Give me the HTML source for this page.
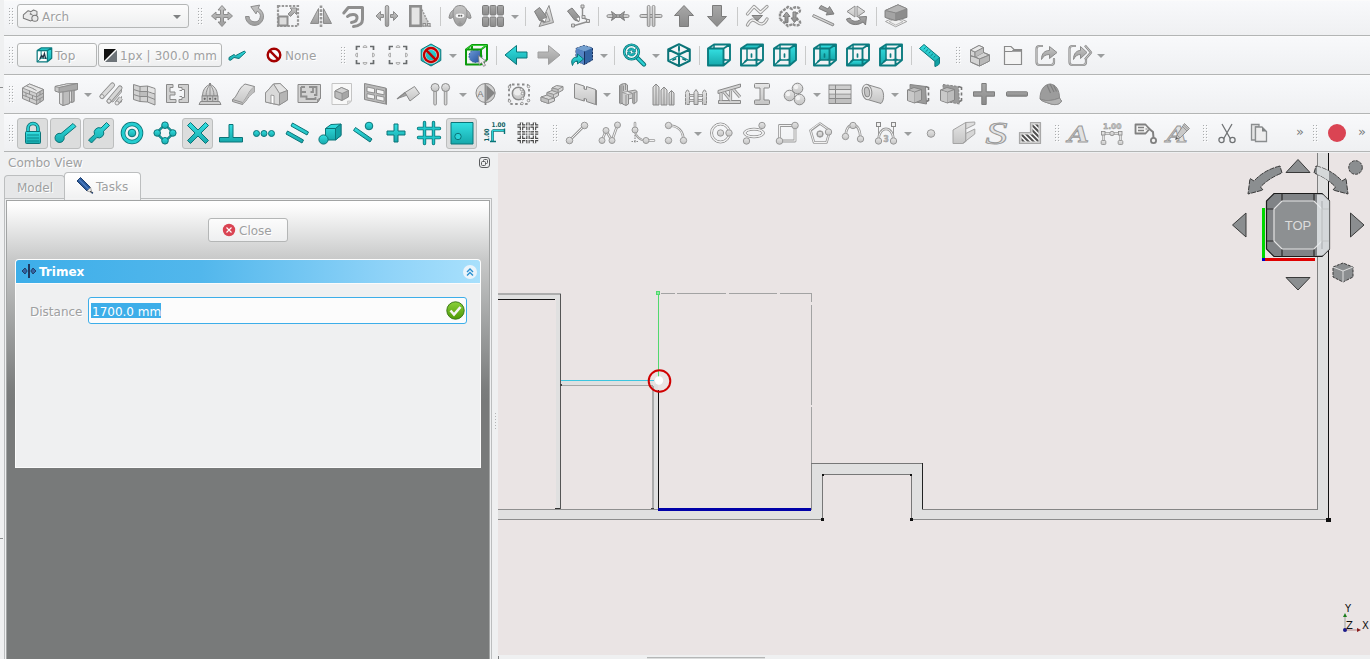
<!DOCTYPE html><html><head><meta charset="utf-8"><title>FreeCAD</title><style>
html,body{margin:0;padding:0}
body{width:1370px;height:659px;overflow:hidden;background:#eff0f1;position:relative;font-family:"DejaVu Sans","Liberation Sans",sans-serif;font-size:12px;color:#232627}
.a{position:absolute}
.tb{position:absolute;left:4px;width:1366px;background:linear-gradient(#f8f9fb,#eff0f2);border-bottom:1px solid #b3b5b5}
.tb:before{content:"";position:absolute;left:0;right:0;top:0;height:1px;background:#fbfbfb}
.grip{position:absolute;width:5px;height:17px;background-image:radial-gradient(circle at 1px 1px,#a9abac 0.8px,transparent 1.1px);background-size:3px 3px}
.sep{position:absolute;width:1px;height:19px;background:#c9caca}
.dis{color:#9ea0a1;text-shadow:1px 1px 0 #fff}
.btn{position:absolute;box-sizing:border-box;border:1px solid #b4b6b6;border-radius:3px;background:linear-gradient(#fcfcfc,#eeeff0)}
.prs{position:absolute;box-sizing:border-box;border:1px solid #bcbebe;border-radius:3px;background:#dcdddd;width:31px;height:31px}
.ic{position:absolute;width:24px;height:24px;overflow:visible}
.arr{position:absolute;width:0;height:0;border-left:4px solid transparent;border-right:4px solid transparent;border-top:4px solid #9b9d9e}
.t{position:absolute;white-space:nowrap;line-height:14px}
</style></head><body>
<svg width="0" height="0" style="position:absolute"><defs>
<symbol id="grip" viewBox="0 0 6 18"><rect x="1" y="1" width="1" height="1" fill="#fff"/><rect x="0" y="0" width="1" height="1" fill="#aaacad"/><rect x="1" y="4" width="1" height="1" fill="#fff"/><rect x="0" y="3" width="1" height="1" fill="#aaacad"/><rect x="1" y="7" width="1" height="1" fill="#fff"/><rect x="0" y="6" width="1" height="1" fill="#aaacad"/><rect x="1" y="10" width="1" height="1" fill="#fff"/><rect x="0" y="9" width="1" height="1" fill="#aaacad"/><rect x="1" y="13" width="1" height="1" fill="#fff"/><rect x="0" y="12" width="1" height="1" fill="#aaacad"/><rect x="1" y="16" width="1" height="1" fill="#fff"/><rect x="0" y="15" width="1" height="1" fill="#aaacad"/><rect x="4" y="1" width="1" height="1" fill="#fff"/><rect x="3" y="0" width="1" height="1" fill="#aaacad"/><rect x="4" y="4" width="1" height="1" fill="#fff"/><rect x="3" y="3" width="1" height="1" fill="#aaacad"/><rect x="4" y="7" width="1" height="1" fill="#fff"/><rect x="3" y="6" width="1" height="1" fill="#aaacad"/><rect x="4" y="10" width="1" height="1" fill="#fff"/><rect x="3" y="9" width="1" height="1" fill="#aaacad"/><rect x="4" y="13" width="1" height="1" fill="#fff"/><rect x="3" y="12" width="1" height="1" fill="#aaacad"/><rect x="4" y="16" width="1" height="1" fill="#fff"/><rect x="3" y="15" width="1" height="1" fill="#aaacad"/></symbol>
<linearGradient id="gg" x1="0" y1="0" x2="0" y2="1"><stop offset="0" stop-color="#c6c6c6"/><stop offset="1" stop-color="#9c9c9c"/></linearGradient>
<linearGradient id="gl" x1="0" y1="0" x2="0" y2="1"><stop offset="0" stop-color="#e6e6e6"/><stop offset="1" stop-color="#c4c4c4"/></linearGradient>
<linearGradient id="gd" x1="0" y1="0" x2="0" y2="1"><stop offset="0" stop-color="#a8a8a8"/><stop offset="1" stop-color="#8a8a8a"/></linearGradient>
<linearGradient id="tg" x1="0" y1="0" x2="0" y2="1"><stop offset="0" stop-color="#34e0e2"/><stop offset="1" stop-color="#16a8ab"/></linearGradient>
<linearGradient id="okg" x1="0" y1="0" x2="0" y2="1"><stop offset="0" stop-color="#8ad03a"/><stop offset="1" stop-color="#4e9a06"/></linearGradient>
<linearGradient id="bg" x1="0" y1="0" x2="1" y2="1"><stop offset="0" stop-color="#6f9ad6"/><stop offset="1" stop-color="#1f4f9c"/></linearGradient>
</defs></svg>
<div class="tb" style="top:0px;height:35px"></div>
<div class="tb" style="top:36px;height:38px"></div>
<div class="tb" style="top:75px;height:38px"></div>
<div class="tb" style="top:114px;height:37px"></div>
<div class="a" style="left:0;top:87px;width:3px;height:1px;background:#8d8f90"></div>
<div class="a" style="left:0;top:538px;width:3px;height:1px;background:#8d8f90"></div>
<svg class="a" style="left:9px;top:8px" width="6" height="18" shape-rendering="crispEdges"><use href="#grip"/></svg>
<div class="btn" style="left:17px;top:4px;width:172px;height:24px"></div>
<svg class="ic" style="left:18px;top:3px" viewBox="0 0 24 24"><g transform="translate(4 5) scale(.68)" fill="#e9e9e9" stroke="#777" stroke-width="1.5" stroke-linejoin="round"><path d="M2 10l7-6 6 2-3 3 6 2v5l-5 3-11-4z"/><path d="M12 6l5-3 5 2v5l-4 2"/><circle cx="19" cy="15" r="4.5"/></g></svg>
<div class="t dis" style="left:42px;top:10px">Arch</div>
<div class="arr" style="left:173px;top:15px;border-top-color:#7f8182"></div>
<svg class="a" style="left:198px;top:8px" width="6" height="18" shape-rendering="crispEdges"><use href="#grip"/></svg>
<svg class="ic" style="left:210px;top:4px" viewBox="0 0 24 24"><path fill="url(#gg)" stroke="#8c8c8c" stroke-width="1" stroke-linejoin="round" d="M12 1.5L16 6H13.500V10.500H18V8L22.500 12L18 16V13.500H13.500V18H16L12 22.500L8 18H10.500V13.500H6V16L1.500 12L6 8V10.500H10.500V6H8Z"/></svg>
<svg class="ic" style="left:243px;top:4px" viewBox="0 0 24 24"><path fill="url(#gg)" stroke="#8c8c8c" stroke-width="1" stroke-linejoin="round" d="M2.500 12.500a9 9 0 1 0 12.800-8.200l1.300-3.200-8.800 1.600 5.200 7.200 1.100-2.700a5.600 5.600 0 1 1-8 5.300z"/></svg>
<svg class="ic" style="left:276px;top:4px" viewBox="0 0 24 24"><rect x="2" y="2" width="20" height="20" fill="none" stroke="#999" stroke-width="2.200" stroke-dasharray="2.400 1.300"/><rect x="2.500" y="12.500" width="9" height="9" fill="#ddd" stroke="#8e8e8e" stroke-width="2"/><path fill="url(#gg)" stroke="#8c8c8c" stroke-width="1" stroke-linejoin="round" d="M12 10l4-4-2-2h6.500v6.500l-2-2-4 4z"/></svg>
<svg class="ic" style="left:309px;top:4px" viewBox="0 0 24 24"><path fill="url(#gg)" stroke="#8c8c8c" stroke-width="1" stroke-linejoin="round" d="M1.500 19.500H9.500V4.500Z"/><path fill="url(#gg)" stroke="#8c8c8c" stroke-width="1" stroke-linejoin="round" d="M22.500 19.500H14.500V4.500Z"/><path d="M12 1.500V23" stroke="#999" stroke-width="2.600" stroke-dasharray="2.600 1.200" fill="none"/></svg>
<svg class="ic" style="left:342px;top:4px" viewBox="0 0 24 24"><path d="M1.800 9l4.500-5.500H20.500V15.500c0 4-3.500 6.500-9 7" fill="none" stroke="#8f8f8f" stroke-width="3" stroke-linejoin="round" stroke-linecap="round"/><path d="M5.500 12.500c2.500-2.500 9-3 9.500.500c.400 3-2 5-5.500 5.500" fill="none" stroke="#8f8f8f" stroke-width="3" stroke-linecap="round"/></svg>
<svg class="ic" style="left:375px;top:4px" viewBox="0 0 24 24"><rect fill="url(#gg)" stroke="#8c8c8c" stroke-width="1" stroke-linejoin="round" x="10.300" y="1.500" width="3.400" height="21" rx="1.500"/><path fill="url(#gg)" stroke="#8c8c8c" stroke-width="1" stroke-linejoin="round" d="M1 12l4.500-4.500v3H8.500v3H5.500v3z"/><path fill="url(#gg)" stroke="#8c8c8c" stroke-width="1" stroke-linejoin="round" d="M23 12l-4.500-4.500v3H15.500v3h3v3z"/></svg>
<svg class="ic" style="left:408px;top:4px" viewBox="0 0 24 24"><path d="M12.500 3L22 22H12.500" fill="url(#gl)" stroke="#9a9a9a" stroke-width="1.600" stroke-dasharray="2 1"/><rect x="2.300" y="2.300" width="10.500" height="19.500" fill="#e4e4e4" stroke="#8e8e8e" stroke-width="2.600"/><rect x="15" y="19.500" width="2.600" height="2.600" fill="#d8d8d8" stroke="#8e8e8e"/><rect x="19.500" y="19.500" width="2.600" height="2.600" fill="#d8d8d8" stroke="#8e8e8e"/></svg>
<div class="sep" style="left:440px;top:7px"></div>
<svg class="ic" style="left:448px;top:4px" viewBox="0 0 24 24"><path fill="url(#gg)" stroke="#8c8c8c" stroke-width="1" stroke-linejoin="round" d="M6.500 6C4 6 1.500 9 1 14c1.500 1 3.500 0 4.500-1.500zM17.500 6c2.500 0 5 3 5.500 8-1.500 1-3.500 0-4.500-1.500z"/><path fill="url(#gg)" stroke="#8c8c8c" stroke-width="1" stroke-linejoin="round" d="M12 1.500c4.500 0 7 3 7 7.500 0 6-2.500 13-7 13s-7-7-7-13c0-4.500 2.500-7.500 7-7.500z"/><ellipse cx="12" cy="11.800" rx="4.400" ry="2.200" fill="#f6f6f6"/><circle cx="11" cy="11.800" r="1" fill="#666"/><circle cx="13.400" cy="11.800" r="1" fill="#666"/><path d="M10 19.500c1.200 1 2.800 1 4 0M12 17.500v2.500" fill="none" stroke="#8f8f8f" stroke-width=".8"/></svg>
<svg class="ic" style="left:481px;top:4px" viewBox="0 0 24 24"><rect fill="url(#gd)" stroke="#7c7c7c" stroke-width="1" stroke-linejoin="round" x="1.5" y="1.5" width="6" height="9.500" rx="1.200"/><rect fill="url(#gd)" stroke="#7c7c7c" stroke-width="1" stroke-linejoin="round" x="1.5" y="13" width="6" height="9.500" rx="1.200"/><rect fill="url(#gd)" stroke="#7c7c7c" stroke-width="1" stroke-linejoin="round" x="9" y="1.5" width="6" height="9.500" rx="1.200"/><rect fill="url(#gd)" stroke="#7c7c7c" stroke-width="1" stroke-linejoin="round" x="9" y="13" width="6" height="9.500" rx="1.200"/><rect fill="url(#gd)" stroke="#7c7c7c" stroke-width="1" stroke-linejoin="round" x="16.5" y="1.5" width="6" height="9.500" rx="1.200"/><rect fill="url(#gd)" stroke="#7c7c7c" stroke-width="1" stroke-linejoin="round" x="16.5" y="13" width="6" height="9.500" rx="1.200"/></svg>
<div class="arr" style="left:511px;top:15px"></div>
<div class="sep" style="left:525px;top:7px"></div>
<svg class="ic" style="left:533px;top:4px" viewBox="0 0 24 24"><path fill="url(#gl)" stroke="#8c8c8c" stroke-width="1" stroke-linejoin="round" d="M16 1.500L20.500 18.500L6 22.500Z"/><path d="M13.500 8l3.500 9-7 2z" fill="#cfcfcf" stroke="#8c8c8c" stroke-width=".8"/><path fill="url(#gd)" stroke="#7c7c7c" stroke-width="1" stroke-linejoin="round" d="M1.500 7.500l5-4 7 9-1.500 5.500-5.500-1.500z"/><path d="M9.500 15.500l2.500 2 .800-3.500z" fill="#fff"/></svg>
<svg class="ic" style="left:566px;top:4px" viewBox="0 0 24 24"><path d="M16.500 2V12M17 13.500L22 16M22 17.500L7 22" fill="none" stroke="#8f8f8f" stroke-width="1.400"/><rect fill="url(#gl)" stroke="#8c8c8c" stroke-width="1" stroke-linejoin="round" x="15" y="1" width="3" height="3"/><rect fill="url(#gl)" stroke="#8c8c8c" stroke-width="1" stroke-linejoin="round" x="16" y="11.500" width="3" height="3"/><rect fill="url(#gl)" stroke="#8c8c8c" stroke-width="1" stroke-linejoin="round" x="20.500" y="15.500" width="3" height="3"/><rect fill="url(#gl)" stroke="#8c8c8c" stroke-width="1" stroke-linejoin="round" x="5.500" y="20" width="3" height="3"/><path fill="url(#gd)" stroke="#7c7c7c" stroke-width="1" stroke-linejoin="round" d="M1.500 7l4.500-3 7.500 9-.500 4.500-4.500-1.500z"/><path d="M10.500 14.500l2.500 2.500.200-3.500z" fill="#fff"/></svg>
<div class="sep" style="left:598px;top:7px"></div>
<svg class="ic" style="left:606px;top:4px" viewBox="0 0 24 24"><rect fill="url(#gl)" stroke="#8c8c8c" stroke-width="1" stroke-linejoin="round" x="1" y="10.700" width="22" height="2.800" rx="1.200"/><path fill="url(#gd)" stroke="#7c7c7c" stroke-width="1" stroke-linejoin="round" d="M5.500 7.500L11.500 12L5.500 16.500L7 12Z"/><path fill="url(#gd)" stroke="#7c7c7c" stroke-width="1" stroke-linejoin="round" d="M18.500 7.500L12.500 12L18.500 16.500L17 12Z"/></svg>
<svg class="ic" style="left:639px;top:4px" viewBox="0 0 24 24"><rect fill="url(#gl)" stroke="#8c8c8c" stroke-width="1" stroke-linejoin="round" x="1" y="10.500" width="22" height="3" rx="1.200"/><rect fill="url(#gl)" stroke="#8c8c8c" stroke-width="1" stroke-linejoin="round" x="8.300" y="1.500" width="2.700" height="21" rx="1.200"/><rect fill="url(#gl)" stroke="#8c8c8c" stroke-width="1" stroke-linejoin="round" x="13.200" y="1.500" width="2.700" height="21" rx="1.200"/></svg>
<svg class="ic" style="left:672px;top:4px" viewBox="0 0 24 24"><path fill="url(#gd)" stroke="#7c7c7c" stroke-width="1" stroke-linejoin="round" d="M12 1.500L21.500 11.500H16.500V22.500H7.500V11.500H2.500Z"/></svg>
<svg class="ic" style="left:705px;top:4px" viewBox="0 0 24 24"><path fill="url(#gd)" stroke="#7c7c7c" stroke-width="1" stroke-linejoin="round" d="M12 22.500L21.500 12.500H16.500V1.500H7.500V12.500H2.500Z"/></svg>
<div class="sep" style="left:737px;top:7px"></div>
<svg class="ic" style="left:745px;top:4px" viewBox="0 0 24 24"><path d="M2.500 10L9 2.500L15.500 8.500L22 2.500" fill="none" stroke="#9a9a9a" stroke-width="3.200" stroke-linecap="round" stroke-linejoin="round"/><path d="M2.500 10L9 2.500L15.500 8.500L22 2.500" fill="none" stroke="#f1f1f1" stroke-width="1.400" stroke-linecap="round" stroke-linejoin="round"/><path d="M2.500 21c3-6 6-6 9.500-3s7 3 10-3" fill="none" stroke="#9a9a9a" stroke-width="3.200" stroke-linecap="round"/><path d="M2.500 21c3-6 6-6 9.500-3s7 3 10-3" fill="none" stroke="#f1f1f1" stroke-width="1.400" stroke-linecap="round"/><path fill="url(#gd)" stroke="#7c7c7c" stroke-width="1" stroke-linejoin="round" d="M7 11.500H17.500L12.300 17Z"/></svg>
<svg class="ic" style="left:778px;top:4px" viewBox="0 0 24 24"><path d="M2 9L10 3l4 2c3-3 8-2 8 1s-3 4-6 3M2 15l8 7 5-2c3 3 8 1 7-2s-4-3-6-2M2 9.500V15" fill="none" stroke="#8e8e8e" stroke-width="2.400" stroke-dasharray="3 1"/><path fill="url(#gd)" stroke="#7c7c7c" stroke-width="1" stroke-linejoin="round" d="M8.500 8L12 12.500H10v6H7v-6H5zM16.500 18.500L13 14h2V8h3v6h2z"/></svg>
<svg class="ic" style="left:811px;top:4px" viewBox="0 0 24 24"><path fill="url(#gl)" stroke="#8c8c8c" stroke-width="1" stroke-linejoin="round" d="M1.500 12.500L2.500 10.500L23 20L22 22Z"/><path fill="url(#gd)" stroke="#7c7c7c" stroke-width="1" stroke-linejoin="round" d="M8 4.500l2-3L17 5l1.500-2.500L23 10l-8 1 1.500-2.500z"/></svg>
<svg class="ic" style="left:844px;top:4px" viewBox="0 0 24 24"><path fill="url(#gl)" stroke="#8c8c8c" stroke-width="1" stroke-linejoin="round" d="M11 2v11L3 7.500z"/><path fill="url(#gl)" stroke="#8c8c8c" stroke-width="1" stroke-linejoin="round" d="M13 2v11l8-5.500z"/><path fill="url(#gd)" stroke="#7c7c7c" stroke-width="1" stroke-linejoin="round" d="M2.500 15c1 5 10 8 16.500 3l2.500 3 1-8.500-8 .500 2 2.500c-4 3-9 2-10.500-1.500z"/></svg>
<div class="sep" style="left:876px;top:7px"></div>
<svg class="ic" style="left:884px;top:4px" viewBox="0 0 24 24"><path d="M1.500 17.500L11.700 22.800L22.800 17.500L11.700 12.500Z" fill="#f0f0f0" stroke="#9c9c9c" stroke-width=".9"/><path d="M5 17.600l6.700 3.400 7.300-3.400-6.700-3z" fill="none" stroke="#a8a8a8" stroke-width=".8"/><path d="M1.200 6.500L14 .8L22.900 4.700V13.400L11.700 16.500L1.200 13.400Z" fill="#8d8d8d" stroke="#7e7e7e" stroke-linejoin="round"/><path d="M1.200 6.500L14 .8L22.900 4.700L11.700 9Z" fill="#b6b6b6" stroke="#858585" stroke-width=".8"/><path d="M11.700 9V16.500L1.200 13.400V6.500Z" fill="#a4a4a4" stroke="#858585" stroke-width=".8"/></svg>
<svg class="a" style="left:9px;top:47px" width="6" height="18" shape-rendering="crispEdges"><use href="#grip"/></svg>
<div class="btn" style="left:17px;top:43px;width:80px;height:24px"></div>
<svg class="ic" style="left:32px;top:43px" viewBox="0 0 24 24"><g transform="translate(4.500 4) scale(.66)"><path d="M2 7H16V21H2Z" fill="#fff"/><path d="M7 1.5V17H23M7 17L1 22.5" fill="none" stroke="#0b7b7f" stroke-width="1.500"/><path d="M16.5 5.5L23 1.5V17L16.5 22.5Z" fill="url(#tg)"/><path d="M1 5.5L7 1.5H23L16.5 5.5Z" fill="url(#tg)"/><path d="M1 5.5H16.5V22.5H1ZM1 5.5L7 1.5H23V17L16.5 22.5M16.5 5.5L23 1.5" fill="none" stroke="#0b7b7f" stroke-width="1.900" stroke-linejoin="round"/><path d="M5 18l3-5 2 3 2-6 2 8" fill="none" stroke="#234" stroke-width="2"/></g></svg>
<div class="t dis" style="left:55px;top:49px">Top</div>
<div class="btn" style="left:98px;top:43px;width:124px;height:24px"></div>
<svg class="a" style="left:104px;top:49px" width="13" height="13" viewBox="0 0 13 13"><path d="M0 0H13L0 13Z" fill="#111"/><path d="M13 0V13H0Z" fill="#6e7479"/><path d="M0 13L13 0" stroke="#fff" stroke-width="1.4"/></svg>
<div class="t dis" style="left:120px;top:49px;letter-spacing:0.1px">1px | 300.0 mm</div>
<svg class="ic" style="left:225px;top:43px" viewBox="0 0 24 24"><path fill="url(#tg)" stroke="#0b7478" stroke-width="1" stroke-linejoin="round" d="M4 14.500l5-3 1.500 1.200L19.500 8l1 1.500-6.500 6-5-1-3 2.500c-1.200.800-2.800-.500-2-1.500z" stroke-width=".8"/></svg>
<svg class="ic" style="left:262px;top:43px" viewBox="0 0 24 24"><g transform="translate(12 12)"><circle r="6.300" fill="#fff" fill-opacity=".6" stroke="#a40000" stroke-width="2.400"/><path d="M-4.300-4.300L4.300 4.300" stroke="#a40000" stroke-width="2.400"/></g></svg>
<div class="t dis" style="left:285px;top:49px">None</div>
<svg class="a" style="left:341px;top:47px" width="6" height="18" shape-rendering="crispEdges"><use href="#grip"/></svg>
<svg class="ic" style="left:353px;top:43px" viewBox="0 0 24 24"><path d="M3.500 7V3.500H7M17 3.500H20.500V7M20.500 17V20.500H17M7 20.500H3.500V17" fill="none" stroke="#686b6d" stroke-width="1.700"/><path d="M10 4.500a2 2 0 0 1 4 0zM10 19.500a2 2 0 0 0 4 0zM4.500 10a2 2 0 0 0 0 4zM19.500 10a2 2 0 0 1 0 4z" fill="#e8e8e8" stroke="#9a9a9a" stroke-width=".7"/></svg>
<svg class="ic" style="left:386px;top:43px" viewBox="0 0 24 24"><path d="M3.500 7V3.500H7M17 3.500H20.500V7M20.500 17V20.500H17M7 20.500H3.500V17" fill="none" stroke="#686b6d" stroke-width="1.700"/><path d="M10 4.500a2 2 0 0 1 4 0zM10 19.500a2 2 0 0 0 4 0zM4.500 10a2 2 0 0 0 0 4zM19.500 10a2 2 0 0 1 0 4z" fill="#e8e8e8" stroke="#9a9a9a" stroke-width=".7"/></svg>
<svg class="ic" style="left:419px;top:43px" viewBox="0 0 24 24"><path fill="url(#tg)" stroke="#0b7478" stroke-width="1" stroke-linejoin="round" d="M12 1L21.800 6.500V17.500L12 23L2.200 17.500V6.500Z" stroke-width="1.400"/><circle cx="12" cy="12" r="7" fill="none" stroke="#f2dede" stroke-width="3.600"/><circle cx="12" cy="12" r="7" fill="none" stroke="#c00000" stroke-width="2.400"/><path d="M7.200 7.200L16.800 16.800" stroke="#c00000" stroke-width="2.600"/></svg>
<div class="arr" style="left:449px;top:54px"></div>
<svg class="ic" style="left:464px;top:43px" viewBox="0 0 24 24"><circle cx="11.500" cy="13" r="6.500" fill="url(#bg)" stroke="#204a87" stroke-width=".8" stroke-dasharray="2 1"/><path d="M2 6.500H17V21.500H2ZM2 6.500L8 2H23V16.500L17 21.500M17 6.500L23 2M8 2V6.500" fill="none" stroke="#0c9a0c" stroke-width="2" stroke-linejoin="round"/><path d="M2.500 6L8 2.500H22.500L17 6" fill="none" stroke="#46e046" stroke-width=".8"/><path d="M14.500 12.500l8 6-3 .300 2 3.500-2 1-2-3.600-2.300 2z" fill="#eee" stroke="#777" stroke-width=".8"/></svg>
<div class="sep" style="left:496px;top:46px"></div>
<svg class="ic" style="left:504px;top:43px" viewBox="0 0 24 24"><path fill="url(#tg)" stroke="#0b7478" stroke-width="1" stroke-linejoin="round" d="M1 12L12.500 2.500V9H23V15H12.500V21.500Z"/></svg>
<svg class="ic" style="left:536.5px;top:43px" viewBox="0 0 24 24"><path d="M23 12L11.500 2.500V9H1V15H11.500V21.500Z" fill="url(#gg)" stroke="#a0a0a0" stroke-width="1"/></svg>
<svg class="ic" style="left:570px;top:43px" viewBox="0 0 24 24"><path d="M6 5.500L14 2.500L22.500 5V17L14.500 21.500L6 18Z" fill="#3465a4" stroke="#17305f" stroke-width="1" stroke-dasharray="2.500 1"/><path d="M6 5.500L14 2.500L22.500 5L14.500 8.500Z" fill="#729fcf"/><path d="M14.500 8.500V21.500L6 18V5.500Z" fill="#5584c4"/><path d="M14.500 8.500V21.500" stroke="#17305f" stroke-width="1"/><path fill="url(#tg)" stroke="#0b7478" stroke-width="1" stroke-linejoin="round" d="M2.500 22.500c-2-5 0-8.500 5-8.500v-3l6 5-6 5v-3c-2.500 0-4 1.500-5 4.500z"/></svg>
<div class="arr" style="left:600px;top:54px"></div>
<div class="sep" style="left:614px;top:46px"></div>
<svg class="ic" style="left:622px;top:43px" viewBox="0 0 24 24"><path d="M15 14.500L22 21.500" stroke="#0b7478" stroke-width="4.400" stroke-linecap="round"/><path d="M15 14.500L22 21.500" stroke="#2bd0d3" stroke-width="2.400" stroke-linecap="round"/><circle cx="9.500" cy="9" r="7.300" fill="#e6fbfb" fill-opacity=".5" stroke="#0b7478" stroke-width="2.600"/><circle cx="9.500" cy="9" r="7.300" fill="none" stroke="#2bd0d3" stroke-width="1"/><path d="M5.500 8a4 4 0 0 1 7-1.500l1-1v3.500H10l1.200-1.200a2.600 2.600 0 0 0-4 .700zM13.500 10a4 4 0 0 1-7 1.500l-1 1V9H9l-1.200 1.200a2.600 2.600 0 0 0 4-.700z" fill="#16b8bb" stroke="#0b7478" stroke-width=".6"/></svg>
<div class="arr" style="left:652px;top:54px"></div>
<svg class="ic" style="left:667px;top:43px" viewBox="0 0 24 24"><path d="M12 1.200L22.800 6.500V17.800L12 23L1.200 17.800V6.500Z M1.200 6.500L12 11.500L22.800 6.500M12 11.500V23" fill="none" stroke="#0b7478" stroke-width="2" stroke-linejoin="round"/><path d="M12 1.500V11.500M2 17.500L12 12.500L22 17.500" fill="none" stroke="#0b8a8e" stroke-width="1.200"/><path d="M12 4v3M6 17l2.500-1M16 16l2.500 1" stroke="#0b7478" stroke-width="1.800" stroke-linecap="round"/></svg>
<div class="sep" style="left:699px;top:46px"></div>
<svg class="ic" style="left:707px;top:43px" viewBox="0 0 24 24"><path d="M7 1.5V17H23M7 17L1 22.5" fill="none" stroke="#0b7b7f" stroke-width="1.500"/><path d="M5 18.500l2.500-2M11.500 11v3M15 16.500h3" fill="none" stroke="#0b7b7f" stroke-width="1.700" stroke-linecap="round"/><path d="M1 5.5H16.5V22.5H1Z" fill="url(#tg)"/><path d="M1 5.5H16.5V22.5H1ZM1 5.5L7 1.5H23V17L16.5 22.5M16.5 5.5L23 1.5" fill="none" stroke="#0b7b7f" stroke-width="1.900" stroke-linejoin="round"/></svg>
<svg class="ic" style="left:740px;top:43px" viewBox="0 0 24 24"><path d="M7 1.5V17H23M7 17L1 22.5" fill="none" stroke="#0b7b7f" stroke-width="1.500"/><path d="M5 18.500l2.500-2M11.500 11v3M15 16.500h3" fill="none" stroke="#0b7b7f" stroke-width="1.700" stroke-linecap="round"/><path d="M1 5.5L7 1.5H23L16.5 5.5Z" fill="url(#tg)"/><path d="M1 5.5H16.5V22.5H1ZM1 5.5L7 1.5H23V17L16.5 22.5M16.5 5.5L23 1.5" fill="none" stroke="#0b7b7f" stroke-width="1.900" stroke-linejoin="round"/></svg>
<svg class="ic" style="left:773px;top:43px" viewBox="0 0 24 24"><path d="M7 1.5V17H23M7 17L1 22.5" fill="none" stroke="#0b7b7f" stroke-width="1.500"/><path d="M5 18.500l2.500-2M11.500 11v3M15 16.500h3" fill="none" stroke="#0b7b7f" stroke-width="1.700" stroke-linecap="round"/><path d="M16.5 5.5L23 1.5V17L16.5 22.5Z" fill="url(#tg)"/><path d="M1 5.5H16.5V22.5H1ZM1 5.5L7 1.5H23V17L16.5 22.5M16.5 5.5L23 1.5" fill="none" stroke="#0b7b7f" stroke-width="1.900" stroke-linejoin="round"/></svg>
<div class="sep" style="left:805px;top:46px"></div>
<svg class="ic" style="left:813px;top:43px" viewBox="0 0 24 24"><path d="M7 1.5H23V17H7Z" fill="url(#tg)"/><path d="M7 1.5V17H23M7 17L1 22.5" fill="none" stroke="#0b7b7f" stroke-width="1.500"/><path d="M5 18.500l2.500-2M11.500 11v3M15 16.500h3" fill="none" stroke="#0b7b7f" stroke-width="1.700" stroke-linecap="round"/><path d="M1 5.5H16.5V22.5H1ZM1 5.5L7 1.5H23V17L16.5 22.5M16.5 5.5L23 1.5" fill="none" stroke="#0b7b7f" stroke-width="1.900" stroke-linejoin="round"/></svg>
<svg class="ic" style="left:846px;top:43px" viewBox="0 0 24 24"><path d="M1 22.5H16.5L23 17H7Z" fill="url(#tg)"/><path d="M7 1.5V17H23M7 17L1 22.5" fill="none" stroke="#0b7b7f" stroke-width="1.500"/><path d="M5 18.500l2.500-2M11.500 11v3M15 16.500h3" fill="none" stroke="#0b7b7f" stroke-width="1.700" stroke-linecap="round"/><path d="M1 5.5H16.5V22.5H1ZM1 5.5L7 1.5H23V17L16.5 22.5M16.5 5.5L23 1.5" fill="none" stroke="#0b7b7f" stroke-width="1.900" stroke-linejoin="round"/></svg>
<svg class="ic" style="left:879px;top:43px" viewBox="0 0 24 24"><path d="M1 5.5L7 1.5V17L1 22.5Z" fill="url(#tg)"/><path d="M7 1.5V17H23M7 17L1 22.5" fill="none" stroke="#0b7b7f" stroke-width="1.500"/><path d="M5 18.500l2.500-2M11.500 11v3M15 16.500h3" fill="none" stroke="#0b7b7f" stroke-width="1.700" stroke-linecap="round"/><path d="M1 5.5H16.5V22.5H1ZM1 5.5L7 1.5H23V17L16.5 22.5M16.5 5.5L23 1.5" fill="none" stroke="#0b7b7f" stroke-width="1.900" stroke-linejoin="round"/></svg>
<div class="sep" style="left:911px;top:46px"></div>
<svg class="ic" style="left:918px;top:43px" viewBox="0 0 24 24"><path fill="url(#tg)" stroke="#0b7478" stroke-width="1" stroke-linejoin="round" d="M1.500 5.500L6 1.500L21.500 14.500V20L17 23.500V18.500Z" stroke-width=".8"/><path d="M17 18.500V23.500C19.500 23 21.500 21.500 21.500 20V14.500Z" fill="#10a0a3" stroke="#0b7478" stroke-width=".6"/><path d="M7.500 4.500l-1.800 1.600M10 6.500l-2.500 2.300M12.500 8.600l-1.800 1.600M15 10.700l-2.500 2.300M17.500 12.800l-1.800 1.600" stroke="#0b7478" stroke-width=".9"/></svg>
<svg class="a" style="left:956px;top:47px" width="6" height="18" shape-rendering="crispEdges"><use href="#grip"/></svg>
<svg class="ic" style="left:968px;top:43px" viewBox="0 0 24 24"><path d="M2.500 7L11 2.500L15.500 4.500V9.500L21.500 12V18L11.500 23L2.500 19Z" fill="#d4d4d4" stroke="#8a8a8a" stroke-width="1" stroke-linejoin="round"/><path d="M2.500 7L7 9L15.500 4.500M7 9V14L2.500 12.500M7 14L11.500 16L21.500 12M11.500 16V23M7 14l8.500-4.500" fill="none" stroke="#8a8a8a" stroke-width="1"/><path d="M7 9L15.500 4.500V9.500L7 14Z" fill="#bdbdbd"/><path d="M11.500 16L21.500 12V18L11.500 23Z" fill="#b8b8b8"/><path d="M2.500 7L11 2.500L15.500 4.500L7 9Z" fill="#e9e9e9"/><path d="M2.500 7L11 2.500L15.500 4.500V9.500L21.500 12V18L11.500 23L2.500 19ZM2.500 7L7 9L15.500 4.500M7 9V14M2.500 13L7 14L11.500 16L21.500 12M11.500 16V23" fill="none" stroke="#8a8a8a" stroke-width="1" stroke-linejoin="round"/></svg>
<svg class="ic" style="left:1001px;top:43px" viewBox="0 0 24 24"><path d="M3.500 21.500V3.500H10L13 6.500H20.500V21.500Z" fill="#f4f4f4" stroke="#8a8a8a" stroke-width="1.200"/><path d="M13 6.500L11 8.500H3.500" fill="none" stroke="#8a8a8a" stroke-width="1"/><path d="M12.500 6.200H20.500V8.800H10.500Z" fill="#8a8a8a"/></svg>
<svg class="ic" style="left:1034px;top:43px" viewBox="0 0 24 24"><path d="M8 3H5.500Q2.500 3 2.500 6V19Q2.500 22 5.500 22H17Q20 22 20 19V16" fill="none" stroke="#8a8a8a" stroke-width="2.200" stroke-linecap="round"/><path d="M8 3H5.500Q2.500 3 2.500 6V19Q2.500 22 5.500 22H17Q20 22 20 19V16" fill="none" stroke="#cfcfcf" stroke-width=".7"/><path fill="url(#gg)" stroke="#8c8c8c" stroke-width="1" stroke-linejoin="round" d="M7.500 16.500c0-6 3-9 8-9V3.500L23 9.500L15.500 15.500V11.500c-4 0-6 1.500-8 5z"/></svg>
<svg class="ic" style="left:1067px;top:43px" viewBox="0 0 24 24"><path d="M8 3H5.500Q2.500 3 2.500 6V19Q2.500 22 5.500 22H16Q19 22 19 19V16" fill="none" stroke="#8a8a8a" stroke-width="2.200" stroke-linecap="round"/><path d="M8 3H5.500Q2.500 3 2.500 6V19Q2.500 22 5.500 22H16Q19 22 19 19V16" fill="none" stroke="#cfcfcf" stroke-width=".7"/><path fill="url(#gg)" stroke="#8c8c8c" stroke-width="1" stroke-linejoin="round" d="M6.500 16.500c0-6 3-9 7-9V3.500L20 9.500L13.500 15.500V11.500c-3.500 0-5 1.500-7 5z"/><path d="M18 2.500L24 9.500L18 16.500" fill="none" stroke="#8a8a8a" stroke-width="2.400" stroke-linejoin="round"/><path d="M18 2.500L24 9.500L18 16.500" fill="none" stroke="#d8d8d8" stroke-width=".8"/></svg>
<div class="arr" style="left:1097px;top:54px"></div>
<svg class="a" style="left:9px;top:86px" width="6" height="18" shape-rendering="crispEdges"><use href="#grip"/></svg>
<svg class="ic" style="left:21px;top:82px" viewBox="0 0 24 24"><path d="M1.500 6L8.500 2L22.500 7.500V18L15.500 22.500L1.500 16.500Z" fill="#cfcfcf" stroke="#8a8a8a" stroke-linejoin="round"/><path d="M1.500 6L15.500 11.500L22.500 7.500L8.500 2Z" fill="#e6e6e6" stroke="#8a8a8a" stroke-width=".8"/><path d="M15.500 11.500V22.500L22.500 18V7.500Z" fill="#bdbdbd" stroke="#8a8a8a" stroke-width=".8"/><path d="M1.500 9.500L15.500 15L22.500 11M1.500 13L15.500 18.500L22.500 14.500M8.500 8.700V12.300M5 11v3.500M11.500 13.500V17M8.500 16v3.200M5.500 4l7 2.700M12 6.700l3.500 1.800M19 9.500V13M19 16.500v3.300" fill="none" stroke="#8a8a8a" stroke-width=".9"/></svg>
<svg class="ic" style="left:54px;top:82px" viewBox="0 0 24 24"><path d="M1 4.500L12.500 2L23.500 1.500V7.500L20 8.500V19.500L17.500 20.500L15.500 19.500V21.500L9 23.500L5.500 21.500V10.500L1 9Z" fill="#c8c8c8" stroke="#8a8a8a" stroke-linejoin="round"/><path d="M1 4.500L5 5.500L23.500 1.500L12.500 2Z" fill="#ececec" stroke="#8a8a8a" stroke-width=".8"/><path d="M5 5.500V10.500L23.500 7.500V1.500Z" fill="#a9a9a9" stroke="#8a8a8a" stroke-width=".8"/><path d="M5.500 10.500V21.500L9 23.500V10Z" fill="#dcdcdc" stroke="#8a8a8a" stroke-width=".8"/><path d="M9 10V23.500L15.500 21.500V9Z" fill="#bdbdbd" stroke="#8a8a8a" stroke-width=".8"/><path d="M15.500 9.200V19.500L17.500 20.500V9Z" fill="#e2e2e2" stroke="#8a8a8a" stroke-width=".8"/><path d="M17.500 9V20.500L20 19.500V8.500Z" fill="#b4b4b4" stroke="#8a8a8a" stroke-width=".8"/></svg>
<svg class="ic" style="left:99px;top:82px" viewBox="0 0 24 24"><path d="M3 14.500L13.500 3" stroke="#8a8a8a" stroke-width="5" stroke-linecap="round"/><path d="M3 14.500L13.500 3" stroke="#dadada" stroke-width="3.400" stroke-linecap="round"/><circle cx="3" cy="14.500" r="2" fill="#e6e6e6" stroke="#8a8a8a" stroke-width=".8"/><path d="M10 19L22.500 4.500V10L14 20Z" fill="#cdcdcd" stroke="#8a8a8a" stroke-width=".8"/><path d="M10 19L21 6" stroke="#8a8a8a" stroke-width="5" stroke-linecap="round"/><path d="M10 19L21 6" stroke="#d6d6d6" stroke-width="3.400" stroke-linecap="round"/><circle cx="10" cy="19" r="2" fill="#e6e6e6" stroke="#8a8a8a" stroke-width=".8"/><path d="M18 21.500L22.500 14.500V20Z" fill="#c4c4c4" stroke="#8a8a8a" stroke-width=".8"/><path d="M18 21L22 16" stroke="#8a8a8a" stroke-width="4.600" stroke-linecap="butt"/><path d="M18 21L22 16" stroke="#d6d6d6" stroke-width="3" /><circle cx="18" cy="21" r="2" fill="#e6e6e6" stroke="#8a8a8a" stroke-width=".8"/></svg>
<svg class="ic" style="left:132px;top:82px" viewBox="0 0 24 24"><path d="M1.500 2.500L8 4.500L15.500 4L23 6.500V23L15.500 20L8 19.500L1.500 17.500Z" fill="#d2d2d2" stroke="#8a8a8a" stroke-linejoin="round"/><path d="M8 4.500V19.500M15.500 4V20M1.500 7.500L8 9.500L15.500 9.500L23 12M1.500 12.500L8 14.500L15.500 14.500L23 17.500" fill="none" stroke="#8a8a8a" stroke-width="1"/><path d="M8.500 10L15 10V14L8.500 14Z" fill="#bcbcbc"/><path d="M16 5L22.500 7V11.300L16 9Z" fill="#e4e4e4"/></svg>
<svg class="ic" style="left:165px;top:82px" viewBox="0 0 24 24"><path d="M1.500 2.500H8V5.500H5V10H10V13H5V17.500H11V20.500H1.500ZM13.500 2.500H23.500V20.500H14V17.500H17V15.500H19.500V7.500H17V5.500H13.500Z" fill="#d0d0d0" stroke="#8a8a8a" stroke-width="1"/><path d="M17 8.500h-2.500M17 14.500h-2.500" stroke="#8a8a8a"/></svg>
<svg class="ic" style="left:198px;top:82px" viewBox="0 0 24 24"><path d="M4.500 14C4.500 8 8 3.500 12 2.500C16 3.500 19.500 8 19.500 14Z" fill="url(#gl)" stroke="#8a8a8a"/><path d="M12 2.500V14M8 14C8 9 10 4.500 12 2.500C14 4.500 16 9 16 14" fill="none" stroke="#8a8a8a" stroke-width=".9"/><rect x="11" y="1" width="2" height="2.500" fill="#8a8a8a"/><rect x="4" y="14" width="16" height="5.500" fill="#c6c6c6" stroke="#8a8a8a"/><path d="M9.300 14v5.500M14.700 14v5.500" stroke="#8a8a8a" stroke-width=".9"/><circle cx="6.700" cy="16.800" r="1.100" fill="#666"/><circle cx="12" cy="16.800" r="1.100" fill="#666"/><circle cx="17.300" cy="16.800" r="1.100" fill="#666"/><path d="M2.500 19.500H21.500L23 22.500H1Z" fill="#cfcfcf" stroke="#8a8a8a"/></svg>
<svg class="ic" style="left:231px;top:82px" viewBox="0 0 24 24"><path d="M1.500 17.500C6 15.500 7 6.500 14 2L23.500 4.500V10C17.500 13 16 19 11.500 22.500L1.500 19.500Z" fill="url(#gl)" stroke="#8a8a8a" stroke-linejoin="round"/><path d="M1.500 17.500L11.500 20.500C16 16.500 17.500 8.500 23.500 4.500M11.500 20.500V22.500" fill="none" stroke="#8a8a8a" stroke-width=".9"/><path d="M11.500 20.500C16 16.500 17.500 8.500 23.500 4.500V10C17.500 13 16 19 11.500 22.500Z" fill="#bdbdbd"/></svg>
<svg class="ic" style="left:264px;top:82px" viewBox="0 0 24 24"><path d="M1.500 11L9.500 2L16 1.500L23.500 8.500V18L15 23L1.500 20Z" fill="#cdcdcd" stroke="#8a8a8a" stroke-linejoin="round"/><path d="M9.500 2L16 1.500L23.500 8.500L15.500 11.500Z" fill="#e3e3e3" stroke="#8a8a8a" stroke-width=".8"/><path d="M15.500 11.500V23L23.500 18V8.500Z" fill="#b5b5b5" stroke="#8a8a8a" stroke-width=".8"/><path d="M1.500 11L9.500 2L15.500 11.500V23L1.500 20Z" fill="#d9d9d9" stroke="#8a8a8a" stroke-width=".8"/><path d="M7 21.200V13l3 .600V21.900Z" fill="#fff" stroke="#8a8a8a" stroke-width=".8"/></svg>
<svg class="ic" style="left:297px;top:82px" viewBox="0 0 24 24"><path d="M1 2.500H23.500V16L20.500 20.500H1Z" fill="#d4d4d4" stroke="#8a8a8a"/><path d="M20.500 20.500V17.500L23.500 16Z" fill="#a8a8a8" stroke="#8a8a8a" stroke-width=".8"/><path d="M4 5h4M4 5v9.500h5.500v2.500h9V15M4 10h5M12 5h7.500v8H17M16 5v5h-2.500" fill="none" stroke="#8f8f8f" stroke-width="1.800"/></svg>
<svg class="ic" style="left:330px;top:82px" viewBox="0 0 24 24"><path d="M2 1.500H21.500V19L17.500 22.500H2Z" fill="#f8f8f8" stroke="#c4c4c4"/><path d="M17.500 22.500V19H21.500Z" fill="#dedede" stroke="#c4c4c4" stroke-width=".8"/><path d="M5 9L11.500 5.500L18.500 8.500V15L12 18.500L5 15.500Z" fill="#a6a6a6" stroke="#8a8a8a" stroke-width=".9"/><path d="M5 9L11.500 5.500L18.500 8.500L12 11.500Z" fill="#d2d2d2" stroke="#8a8a8a" stroke-width=".8"/><path d="M12 11.500V18.500L5 15.500V9Z" fill="#bcbcbc" stroke="#8a8a8a" stroke-width=".8"/></svg>
<svg class="ic" style="left:363px;top:82px" viewBox="0 0 24 24"><path d="M1.500 1.500L22.500 6L23.500 6.500V22.500L22.500 22L1.500 17.500Z" fill="#b9b9b9" stroke="#8a8a8a" stroke-linejoin="round"/><path d="M4 5L11.500 6.600V11L4 9.600ZM13.500 7L21 8.700V12.800L13.500 11.300ZM4 11.700L11.500 13.200V17.200L4 15.800ZM13.500 13.600L21 15V19.300L13.500 17.700Z" fill="#f3f3f3" stroke="#8a8a8a" stroke-width=".9"/><path d="M22.500 6V22" stroke="#8a8a8a" stroke-width=".8"/></svg>
<svg class="ic" style="left:396px;top:82px" viewBox="0 0 24 24"><path d="M1.500 16.500L9 10.500L11.500 13Z" fill="#a4a4a4" stroke="#8a8a8a" stroke-width=".9"/><path d="M9 10.500L18.500 4.500L23.500 11.500L14 19Z" fill="url(#gl)" stroke="#8a8a8a" stroke-linejoin="round"/><path d="M1 17L9 10.500" stroke="#8a8a8a" stroke-width="1.200"/></svg>
<svg class="ic" style="left:429px;top:82px" viewBox="0 0 24 24"><rect x="4.800" y="8" width="2.600" height="15" rx="1" fill="#d6d6d6" stroke="#8a8a8a" stroke-width=".9"/><rect x="15.300" y="8" width="2.600" height="15" rx="1" fill="#d6d6d6" stroke="#8a8a8a" stroke-width=".9"/><circle cx="6.100" cy="5.500" r="4" fill="url(#gl)" stroke="#8a8a8a"/><circle cx="16.600" cy="5.500" r="4" fill="url(#gl)" stroke="#8a8a8a"/></svg>
<svg class="ic" style="left:474px;top:82px" viewBox="0 0 24 24"><circle cx="11.500" cy="11" r="9.500" fill="#dedede" stroke="#8a8a8a"/><path d="M11.500 1.500V23" stroke="#808080" stroke-width="1.800"/><path d="M11.500 1.500A9.500 9.500 0 0 1 11.500 20.500Z" fill="#d0d0d0" stroke="#8a8a8a" stroke-width=".8"/><path d="M12.300 3L21 11L12.300 19.500Z" fill="#858585"/><text x="3.300" y="14.500" font-family="Liberation Sans,sans-serif" font-size="9.500" fill="#777">A</text></svg>
<svg class="ic" style="left:507px;top:82px" viewBox="0 0 24 24"><rect x="2" y="2.500" width="20" height="19.500" rx="3" fill="none" stroke="#8a8a8a" stroke-width="1.800" stroke-dasharray="2.500 2.500"/><circle cx="11.500" cy="11.500" r="6.200" fill="url(#gl)" stroke="#8a8a8a" stroke-width="1.400"/><circle cx="10.500" cy="10" r="3.500" fill="#ececec"/><circle cx="14.500" cy="7.500" r="1.300" fill="#eee" stroke="#8a8a8a" stroke-width=".8"/><circle cx="15.500" cy="11.500" r="1.300" fill="#eee" stroke="#8a8a8a" stroke-width=".8"/><circle cx="15.500" cy="16.500" r="1.300" fill="#eee" stroke="#8a8a8a" stroke-width=".8"/><circle cx="15" cy="21.500" r="1.300" fill="#eee" stroke="#8a8a8a" stroke-width=".8"/><circle cx="2.500" cy="5" r="1.300" fill="#eee" stroke="#8a8a8a" stroke-width=".8"/><circle cx="2.500" cy="19" r="1.300" fill="#eee" stroke="#8a8a8a" stroke-width=".8"/><circle cx="21.500" cy="4.500" r="1.300" fill="#eee" stroke="#8a8a8a" stroke-width=".8"/><circle cx="21.500" cy="18.500" r="1.300" fill="#eee" stroke="#8a8a8a" stroke-width=".8"/></svg>
<svg class="ic" style="left:540px;top:82px" viewBox="0 0 24 24"><path d="M1 15L7 13V10.500L12 8.500V6L16.500 3.500L23 4.500V8L18.500 10.500V13.500L14.500 16V19L8.500 21.500L1 19Z" fill="#d6d6d6" stroke="#8a8a8a" stroke-linejoin="round"/><path d="M1 15L8.500 17.500L14.500 16L7 13M8.500 17.500V21.500M7 10.500L13.500 12.500L18.500 10.500L12 8.500M13.500 12.500V16M12 6L18 7.500L23 4.500M18 7.500V10.500" fill="none" stroke="#8a8a8a" stroke-width=".9"/><path d="M1 15L8.500 17.500V21.500L1 19ZM7 10.500L13.500 12.500V16L7 13ZM12 6L18 7.500V10.500L12 8.500Z" fill="#c0c0c0" stroke="#8a8a8a" stroke-width=".7"/></svg>
<svg class="ic" style="left:573px;top:82px" viewBox="0 0 24 24"><path d="M1.500 2L3 1.500L11 4V7L13.500 7.500V4.500L22.500 7.500L23.500 8.500V23L22.500 22.500L13.500 19.500V17L11 16.500V19L1.500 16Z" fill="url(#gl)" stroke="#8a8a8a" stroke-linejoin="round"/><path d="M22.500 7.500V22.500" stroke="#8a8a8a" stroke-width=".9"/><path d="M22.500 7.500L23.500 8.500V23L22.500 22.500Z" fill="#8f8f8f"/><path d="M11 4l1 .500v3l-1-.500zM11 16.500l1 .400v2.600l-1-.500z" fill="#8f8f8f"/></svg>
<svg class="ic" style="left:618px;top:82px" viewBox="0 0 24 24"><path d="M1.500 3.500L4 2L7.500 1.500L9.500 3V9.500L17.500 8L19 9.500V19.500L16 22L14.500 21V16L10.500 17V22L8 23.500L4.500 22V21L2.500 22L1.500 21Z" fill="#cfcfcf" stroke="#8a8a8a" stroke-linejoin="round"/><path d="M4 2V21.500M7.500 1.500V8M5.500 3.500V9M9.500 9.500L14.500 11.500L19 9.500M14.500 11.500V21M10.500 11V17M16.500 11V21.500M8 13v10M2.800 3.500V21" fill="none" stroke="#8a8a8a" stroke-width=".9"/><path d="M4.500 10.500L9.500 9.500L14.500 11.500L10 12.500Z" fill="#e9e9e9" stroke="#8a8a8a" stroke-width=".7"/><path d="M14.500 11.500V21L16.500 21.500V11Z" fill="#a9a9a9"/></svg>
<svg class="ic" style="left:651px;top:82px" viewBox="0 0 24 24"><path d="M2 5L5 2L8 5V23H2Z" fill="url(#gl)" stroke="#8a8a8a" stroke-linejoin="round"/><path d="M10 8L13 5L16 8V23H10Z" fill="url(#gl)" stroke="#8a8a8a" stroke-linejoin="round"/><path d="M18 11L20.500 8.500L23 11V23H18Z" fill="url(#gl)" stroke="#8a8a8a" stroke-linejoin="round"/><path d="M5 2V23M13 5V23M20.500 8.500V23" stroke="#8a8a8a" stroke-width=".9"/></svg>
<svg class="ic" style="left:684px;top:82px" viewBox="0 0 24 24"><path d="M1 13.500H23M1 18.500H23" stroke="#8a8a8a" stroke-width="3"/><path d="M1 13.500H23M1 18.500H23" stroke="#dcdcdc" stroke-width="1.400"/><path d="M1.500 10.500L3.500 7.500L5.500 10.500V22.500H1.500Z" fill="url(#gl)" stroke="#8a8a8a" stroke-dasharray="3 .8"/><path d="M10 10.500L12 7.500L14 10.500V22.500H10Z" fill="url(#gl)" stroke="#8a8a8a"/><path d="M18.500 10.500L20.500 7.500L22.500 10.500V22.500H18.500Z" fill="url(#gl)" stroke="#8a8a8a" stroke-dasharray="3 .8"/></svg>
<svg class="ic" style="left:717px;top:82px" viewBox="0 0 24 24"><path d="M1 8.500L23.500 2V5L1 11.500Z" fill="#d3d3d3" stroke="#8a8a8a" stroke-linejoin="round"/><path d="M1.500 18.500H23.500V21.500H1.500Z" fill="#d3d3d3" stroke="#8a8a8a"/><path d="M4 11V18.500M7 10L14 18.500M13.500 8.500V18.500M16.500 7.500L23 15" stroke="#8a8a8a" stroke-width="3.200"/><path d="M4 11V18.500M7 10L14 18.500M13.500 8.500V18.500M16.500 7.500L23 15" stroke="#d8d8d8" stroke-width="1.600"/></svg>
<svg class="ic" style="left:750px;top:82px" viewBox="0 0 24 24"><path d="M4.500 2.500Q4.500 1.500 5.500 1.500H18.500Q19.500 1.500 19.500 2.500V5Q19.500 6 18.500 6H14V18H18.500Q19.500 18 19.500 19V21.500Q19.500 22.500 18.500 22.500H5.500Q4.500 22.500 4.500 21.500V19Q4.500 18 5.500 18H10V6H5.500Q4.500 6 4.500 5Z" fill="url(#gl)" stroke="#8a8a8a"/></svg>
<svg class="ic" style="left:783px;top:82px" viewBox="0 0 24 24"><circle cx="14.500" cy="6.500" r="5.300" fill="url(#gl)" stroke="#8a8a8a"/><circle cx="6.500" cy="13.500" r="5.300" fill="url(#gl)" stroke="#8a8a8a"/><circle cx="16.500" cy="17.500" r="5.300" fill="url(#gl)" stroke="#8a8a8a"/><circle cx="13" cy="5" r="2.200" fill="#f2f2f2"/><circle cx="5" cy="12" r="2.200" fill="#f2f2f2"/><circle cx="15" cy="16" r="2.200" fill="#f2f2f2"/></svg>
<svg class="ic" style="left:828px;top:82px" viewBox="0 0 24 24"><rect x="1" y="3" width="22" height="18.500" fill="#cdcdcd" stroke="#8a8a8a"/><path d="M1 7.500H23M1 12H23M1 16.500H23M7.500 3V21.500" stroke="#8a8a8a" stroke-width="1"/><rect x="1.500" y="8" width="21" height="3.500" fill="#e4e4e4"/><rect x="1.500" y="17" width="21" height="4" fill="#c0c0c0"/><path d="M7.500 3V21.500" stroke="#8a8a8a" stroke-width="1"/></svg>
<svg class="ic" style="left:861px;top:82px" viewBox="0 0 24 24"><path d="M6 2.500L19.500 6.500C23 8 24 18 20 21.500L6.500 17.500Z" fill="url(#gl)" stroke="#8a8a8a"/><ellipse cx="6" cy="10" rx="4.800" ry="7.700" fill="#e9e9e9" stroke="#8a8a8a" transform="rotate(-8 6 10)"/><ellipse cx="6" cy="10" rx="2.600" ry="4.800" fill="#c4c4c4" stroke="#8a8a8a" transform="rotate(-8 6 10)"/></svg>
<svg class="ic" style="left:906px;top:82px" viewBox="0 0 24 24"><path d="M4 2.500L19.500 4.500L20.500 22L4.500 19Z" fill="#9b9b9b" stroke="#858585" /><path d="M1.500 8L8 5.500L15.500 7.500V18L8.500 21L1.500 18.500Z" fill="#bdbdbd" stroke="#858585"/><path d="M1.500 8L8.500 10L15.500 7.500M8.500 10V21" fill="none" stroke="#858585" stroke-width=".9"/><path d="M2 8.600L8.500 10.500V20.500L2 18.200Z" fill="#c9c9c9"/><path d="M19.500 4.500L22.500 5.500V8M22.500 10.500V13.500M22.500 16V18.500L20.500 19.500" fill="none" stroke="#777" stroke-width="1.600"/></svg>
<svg class="ic" style="left:939px;top:82px" viewBox="0 0 24 24"><path d="M4 2.500L19.500 4.500L20.500 22L4.500 19Z" fill="#9b9b9b" stroke="#858585" stroke-dasharray="2.500 1.200"/><path d="M1.500 8L8 5.500L15.500 7.500V18L8.500 21L1.500 18.500Z" fill="#bdbdbd" stroke="#858585"/><path d="M1.500 8L8.500 10L15.500 7.500M8.500 10V21" fill="none" stroke="#858585" stroke-width=".9"/><path d="M2 8.600L8.500 10.500V20.500L2 18.200Z" fill="#c9c9c9"/><path d="M19.500 4.500L22.500 5.500V8M22.500 10.500V13.500M22.500 16V18.500L20.500 19.500" fill="none" stroke="#777" stroke-width="1.600"/></svg>
<svg class="ic" style="left:972px;top:82px" viewBox="0 0 24 24"><path fill="url(#gd)" stroke="#7c7c7c" stroke-width="1" stroke-linejoin="round" d="M9.800 1.500H14.200V9.800H22.500V14.200H14.200V22.500H9.800V14.200H1.500V9.800H9.800Z"/></svg>
<svg class="ic" style="left:1005px;top:82px" viewBox="0 0 24 24"><rect fill="url(#gd)" stroke="#7c7c7c" stroke-width="1" stroke-linejoin="round" x="1.500" y="9.800" width="21" height="4.400" rx=".8"/></svg>
<svg class="ic" style="left:1038px;top:82px" viewBox="0 0 24 24"><path d="M2 17C2 8 6 2.500 12 2C18 2.500 21.500 8 21.500 16L23.500 19C22.500 22 18 23.500 13 22C9 20.500 4 19.500 2 17Z" fill="#9c9c9c" stroke="#8a8a8a"/><path d="M2 17C6 19 13 19.500 21.500 16" fill="none" stroke="#7c7c7c" stroke-width="1"/><path d="M9 3L12.500 11M12 2L16 10M15.500 3L18.500 9.500" fill="none" stroke="#808080" stroke-width="1.200"/><path d="M2 17C4 19.500 9 20.500 13 22C18 23.500 22.500 22 23.500 19L21.500 16C13 19.500 6 19 2 17Z" fill="#b2b2b2" stroke="#8a8a8a" stroke-width=".8"/></svg>
<div class="arr" style="left:84px;top:93px"></div>
<div class="arr" style="left:459px;top:93px"></div>
<div class="arr" style="left:603px;top:93px"></div>
<div class="arr" style="left:813px;top:93px"></div>
<div class="arr" style="left:891px;top:93px"></div>
<svg class="a" style="left:9px;top:125px" width="6" height="18" shape-rendering="crispEdges"><use href="#grip"/></svg>
<div class="prs" style="left:17px;top:118px"></div>
<div class="prs" style="left:50px;top:118px"></div>
<div class="prs" style="left:83px;top:118px"></div>
<div class="prs" style="left:182px;top:118px"></div>
<div class="prs" style="left:446px;top:118px"></div>
<svg class="ic" style="left:21px;top:121px" viewBox="0 0 24 24"><path d="M7 11V7.500a5 5 0 0 1 10 0V11" fill="none" stroke="#0b7478" stroke-width="3.600"/><path d="M7 11V7.500a5 5 0 0 1 10 0V11" fill="none" stroke="#2ed3d6" stroke-width="1.800"/><rect fill="url(#tg)" stroke="#0b7478" stroke-width="1" stroke-linejoin="round" x="4.500" y="10.500" width="15" height="12" rx="1"/><path d="M6 14h12M6 17h12M6 20h12" stroke="#0b8a8e" stroke-width="1"/></svg>
<svg class="ic" style="left:54px;top:121px" viewBox="0 0 24 24"><path fill="url(#tg)" stroke="#0b7478" stroke-width="1" stroke-linejoin="round" d="M19 2.500L22 5.500L10 15.500A4.600 4.600 0 1 1 7 12.500Z"/></svg>
<svg class="ic" style="left:87px;top:121px" viewBox="0 0 24 24"><path fill="url(#tg)" stroke="#0b7478" stroke-width="1" stroke-linejoin="round" d="M19.500 1.500L22.500 4.500L16.500 10.200A5 5 0 0 1 9.800 16.500L4.500 22L1.500 19L7.500 13.500A5 5 0 0 1 14 7Z"/></svg>
<svg class="ic" style="left:120px;top:121px" viewBox="0 0 24 24"><circle cx="12" cy="12" r="9" fill="none" stroke="#0b7478" stroke-width="4.600"/><circle cx="12" cy="12" r="9" fill="none" stroke="#25cdd0" stroke-width="3"/><circle fill="url(#tg)" stroke="#0b7478" stroke-width="1" stroke-linejoin="round" cx="12" cy="12" r="3.800"/></svg>
<svg class="ic" style="left:153px;top:121px" viewBox="0 0 24 24"><path d="M12 3.500L20.500 12L12 20.500L3.500 12Z" fill="none" stroke="#0b7478" stroke-width="2.400"/><path d="M12 3.500L20.500 12L12 20.500L3.500 12Z" fill="none" stroke="#25cdd0" stroke-width=".8"/><circle fill="url(#tg)" stroke="#0b7478" stroke-width="1" stroke-linejoin="round" cx="12" cy="4.200" r="3.300"/><circle fill="url(#tg)" stroke="#0b7478" stroke-width="1" stroke-linejoin="round" cx="19.800" cy="12" r="3.300"/><circle fill="url(#tg)" stroke="#0b7478" stroke-width="1" stroke-linejoin="round" cx="12" cy="19.800" r="3.300"/><circle fill="url(#tg)" stroke="#0b7478" stroke-width="1" stroke-linejoin="round" cx="4.200" cy="12" r="3.300"/></svg>
<svg class="ic" style="left:186px;top:121px" viewBox="0 0 24 24"><path fill="url(#tg)" stroke="#0b7478" stroke-width="1" stroke-linejoin="round" d="M4.500 1.500L12 9L19.500 1.500L22.500 4.500L15 12L22.500 19.500L19.500 22.500L12 15L4.500 22.500L1.500 19.500L9 12L1.500 4.500Z"/></svg>
<svg class="ic" style="left:219px;top:121px" viewBox="0 0 24 24"><path fill="url(#tg)" stroke="#0b7478" stroke-width="1" stroke-linejoin="round" d="M10 3.500H14V16.500H23.500V21H.500V16.500H10Z"/></svg>
<svg class="ic" style="left:252px;top:121px" viewBox="0 0 24 24"><circle fill="url(#tg)" stroke="#0b7478" stroke-width="1" stroke-linejoin="round" cx="4.500" cy="12.500" r="3"/><circle fill="url(#tg)" stroke="#0b7478" stroke-width="1" stroke-linejoin="round" cx="12" cy="12.500" r="3"/><circle fill="url(#tg)" stroke="#0b7478" stroke-width="1" stroke-linejoin="round" cx="19.500" cy="12.500" r="3"/></svg>
<svg class="ic" style="left:285px;top:121px" viewBox="0 0 24 24"><path fill="url(#tg)" stroke="#0b7478" stroke-width="1" stroke-linejoin="round" d="M7.500 2L23.500 11L22 14L6 5ZM2.500 10L18.500 19L17 22L1 13Z"/></svg>
<svg class="ic" style="left:318px;top:121px" viewBox="0 0 24 24"><path d="M7.500 7.500L13 3.500L23 3V14.500L17.500 19H7.500Z" fill="url(#tg)" stroke="#0b7478" stroke-linejoin="round"/><path d="M7.500 7.500H17.500V19M17.500 7.500L23 3" fill="none" stroke="#0b7478" stroke-width="1"/><path d="M17.500 7.500L23 3V14.500L17.500 19Z" fill="#12a3a6" stroke="#0b7478" stroke-width=".8"/><circle fill="url(#tg)" stroke="#0b7478" stroke-width="1" stroke-linejoin="round" cx="5.500" cy="18.500" r="4.600"/></svg>
<svg class="ic" style="left:351px;top:121px" viewBox="0 0 24 24"><path fill="url(#tg)" stroke="#0b7478" stroke-width="1" stroke-linejoin="round" d="M2.500 9.500L4.500 6.500L21 18L19 21Z"/><circle fill="url(#tg)" stroke="#0b7478" stroke-width="1" stroke-linejoin="round" cx="18" cy="5" r="3.800"/></svg>
<svg class="ic" style="left:384px;top:121px" viewBox="0 0 24 24"><path fill="url(#tg)" stroke="#0b7478" stroke-width="1" stroke-linejoin="round" d="M10 3H14V10H21V14H14V21H10V14H3V10H10Z"/></svg>
<svg class="ic" style="left:417px;top:121px" viewBox="0 0 24 24"><path d="M7.500 1.500V22.500M16.500 1.500V22.500M1.500 7.500H22.500M1.500 16.500H22.500" stroke="#0b7478" stroke-width="3.400" stroke-linecap="round"/><path d="M7.500 1.500V22.500M16.500 1.500V22.500M1.500 7.500H22.500M1.500 16.500H22.500" stroke="#22c7ca" stroke-width="1.800" stroke-linecap="round"/></svg>
<svg class="ic" style="left:450px;top:121px" viewBox="0 0 24 24"><rect fill="url(#tg)" stroke="#0b7478" stroke-width="1" stroke-linejoin="round" x="1" y="1.500" width="22" height="21.500"/><circle cx="8" cy="15.500" r="3.200" fill="#2ad4d7" stroke="#0b7478" stroke-width="1"/></svg>
<svg class="ic" style="left:482.5px;top:121px" viewBox="0 0 24 24"><path d="M9.500 9.500H22M9.500 9.500V20.500" stroke="#0b7478" stroke-width="2.600" fill="none"/><path d="M9.500 9.500H22M9.500 9.500V20.500" stroke="#2ad4d7" stroke-width="1.200" fill="none"/><path d="M21.500 7.500v5.500M7 20.500h6" stroke="#0b7478" stroke-width="1.400"/><text x="8.500" y="6.300" font-family="DejaVu Sans,sans-serif" font-weight="bold" font-size="6.500" fill="#0b5f63" textLength="14" lengthAdjust="spacingAndGlyphs">1.00</text><text x="0" y="0" transform="translate(6.300 20.500) rotate(-90)" font-family="DejaVu Sans,sans-serif" font-weight="bold" font-size="6.500" fill="#0b5f63" textLength="13" lengthAdjust="spacingAndGlyphs">1.00</text></svg>
<svg class="ic" style="left:516px;top:121px" viewBox="0 0 24 24"><path d="M5.500 1.500V22.500M12 1.500V22.500M18.500 1.500V22.500M1.500 5H22.500M1.500 12H22.500M1.500 18.500H22.500" stroke="#454545" stroke-width="3.400" stroke-dasharray="3.500 .8"/><path d="M5.500 1.500V22.500M12 1.500V22.500M18.500 1.500V22.500M1.500 5H22.500M1.500 12H22.500M1.500 18.500H22.500" stroke="#fafafa" stroke-width="1.200"/></svg>
<svg class="a" style="left:553px;top:125px" width="6" height="18" shape-rendering="crispEdges"><use href="#grip"/></svg>
<svg class="ic" style="left:565px;top:121px" viewBox="0 0 24 24"><path d="M4.500 19.500L19.500 4.500" fill="none" stroke="#999" stroke-width="2.6" stroke-linecap="round" stroke-linejoin="round"/><path d="M4.500 19.500L19.500 4.500" fill="none" stroke="#f2f2f2" stroke-width="1.0" stroke-linecap="round" stroke-linejoin="round"/><circle cx="4.5" cy="19.5" r="3.3" fill="url(#gl)" stroke="#999" stroke-width="1"/><circle cx="19.5" cy="4.5" r="3.3" fill="url(#gl)" stroke="#999" stroke-width="1"/></svg>
<svg class="ic" style="left:598px;top:121px" viewBox="0 0 24 24"><path d="M4 19.500L8 9.500L14 19.500L19.500 4" fill="none" stroke="#999" stroke-width="2.6" stroke-linecap="round" stroke-linejoin="round"/><path d="M4 19.500L8 9.500L14 19.500L19.500 4" fill="none" stroke="#f2f2f2" stroke-width="1.0" stroke-linecap="round" stroke-linejoin="round"/><circle cx="4" cy="19.5" r="3" fill="url(#gl)" stroke="#999" stroke-width="1"/><circle cx="8" cy="9.5" r="3" fill="url(#gl)" stroke="#999" stroke-width="1"/><circle cx="14" cy="19.5" r="3" fill="url(#gl)" stroke="#999" stroke-width="1"/><circle cx="19.5" cy="4" r="3" fill="url(#gl)" stroke="#999" stroke-width="1"/></svg>
<svg class="ic" style="left:631px;top:121px" viewBox="0 0 24 24"><path d="M4 2V9M15 19.500H23" fill="none" stroke="#999" stroke-width="2.6" stroke-linecap="round" stroke-linejoin="round"/><path d="M4 2V9M15 19.500H23" fill="none" stroke="#f2f2f2" stroke-width="1.0" stroke-linecap="round" stroke-linejoin="round"/><path d="M4 9C4 15 9 19.500 15 19.500" fill="none" stroke="#999" stroke-width="2.2" stroke-linecap="round" stroke-linejoin="round"/><path d="M4 9C4 15 9 19.500 15 19.500" fill="none" stroke="#f2f2f2" stroke-width="0.6000000000000001" stroke-linecap="round" stroke-linejoin="round"/><circle cx="4" cy="9" r="3" fill="url(#gl)" stroke="#999" stroke-width="1"/><circle cx="15" cy="19.5" r="3" fill="url(#gl)" stroke="#999" stroke-width="1"/><path d="M4 14v8M.500 20.500h7" stroke="#8e8e8e" stroke-width="1.200" stroke-dasharray="1.500 1"/></svg>
<svg class="ic" style="left:664px;top:121px" viewBox="0 0 24 24"><path d="M4.500 4.500C14 4.500 19.500 10 19.500 19.500" fill="none" stroke="#999" stroke-width="2.6" stroke-linecap="round" stroke-linejoin="round"/><path d="M4.500 4.500C14 4.500 19.500 10 19.500 19.500" fill="none" stroke="#f2f2f2" stroke-width="1.0" stroke-linecap="round" stroke-linejoin="round"/><circle cx="4.5" cy="4.5" r="3.2" fill="url(#gl)" stroke="#999" stroke-width="1"/><circle cx="19.5" cy="19.5" r="3.2" fill="url(#gl)" stroke="#999" stroke-width="1"/><circle cx="4.5" cy="19.5" r="3.2" fill="url(#gl)" stroke="#999" stroke-width="1"/></svg>
<svg class="ic" style="left:709px;top:121px" viewBox="0 0 24 24"><circle cx="11.500" cy="12" r="10" fill="none" stroke="#999" stroke-width="1"/><circle cx="11.500" cy="12" r="8" fill="none" stroke="#999" stroke-width="1"/><circle cx="11.500" cy="12" r="9" fill="none" stroke="#f2f2f2" stroke-width="1"/><circle cx="11.5" cy="12" r="3.2" fill="url(#gl)" stroke="#999" stroke-width="1"/><circle cx="20" cy="12" r="3.2" fill="url(#gl)" stroke="#999" stroke-width="1"/></svg>
<svg class="ic" style="left:742px;top:121px" viewBox="0 0 24 24"><ellipse cx="12" cy="12" rx="10.500" ry="4.800" fill="none" stroke="#999" stroke-width="1"/><ellipse cx="12" cy="12" rx="8" ry="2.800" fill="none" stroke="#999" stroke-width="1"/><ellipse cx="12" cy="12" rx="9.300" ry="3.800" fill="none" stroke="#f2f2f2" stroke-width="1"/><circle cx="4.5" cy="20" r="3.2" fill="url(#gl)" stroke="#999" stroke-width="1"/><circle cx="20" cy="4.5" r="3.2" fill="url(#gl)" stroke="#999" stroke-width="1"/></svg>
<svg class="ic" style="left:775px;top:121px" viewBox="0 0 24 24"><path d="M4.500 4.500H20V20H4.500Z" fill="none" stroke="#999" stroke-width="2.8" stroke-linecap="round" stroke-linejoin="round"/><path d="M4.500 4.500H20V20H4.500Z" fill="none" stroke="#f2f2f2" stroke-width="1.1999999999999997" stroke-linecap="round" stroke-linejoin="round"/><circle cx="4.5" cy="20" r="3.3" fill="url(#gl)" stroke="#999" stroke-width="1"/><circle cx="20" cy="4.5" r="3.3" fill="url(#gl)" stroke="#999" stroke-width="1"/></svg>
<svg class="ic" style="left:808px;top:121px" viewBox="0 0 24 24"><path d="M12 2.500L22 9.500L18.500 21.500H6L2.500 9.500Z" fill="none" stroke="#999" stroke-width="2.6" stroke-linecap="round" stroke-linejoin="round"/><path d="M12 2.500L22 9.500L18.500 21.500H6L2.500 9.500Z" fill="none" stroke="#f2f2f2" stroke-width="1.0" stroke-linecap="round" stroke-linejoin="round"/><circle cx="12" cy="13" r="3.2" fill="url(#gl)" stroke="#999" stroke-width="1"/><rect x="9.500" y="10.500" width="5" height="5" rx="1.500" fill="url(#gl)" stroke="#999"/><circle cx="20.5" cy="11" r="3.2" fill="url(#gl)" stroke="#999" stroke-width="1"/></svg>
<svg class="ic" style="left:841px;top:121px" viewBox="0 0 24 24"><path d="M4.500 15.500C5 7 8 4 12 4S19 7 19.500 17.500" fill="none" stroke="#999" stroke-width="2.6" stroke-linecap="round" stroke-linejoin="round"/><path d="M4.500 15.500C5 7 8 4 12 4S19 7 19.500 17.500" fill="none" stroke="#f2f2f2" stroke-width="1.0" stroke-linecap="round" stroke-linejoin="round"/><circle cx="12" cy="4.5" r="3.2" fill="url(#gl)" stroke="#999" stroke-width="1"/><circle cx="4.5" cy="15.5" r="3.2" fill="url(#gl)" stroke="#999" stroke-width="1"/><circle cx="19.5" cy="18" r="3.2" fill="url(#gl)" stroke="#999" stroke-width="1"/></svg>
<svg class="ic" style="left:874px;top:121px" viewBox="0 0 24 24"><path d="M4.500 4.500V19.500M19.500 4.500V19.500" stroke="#999" stroke-width="1"/><path d="M4.500 19.500C4.500 4 19.500 4 19.500 19.500" fill="none" stroke="#999" stroke-width="2.6" stroke-linecap="round" stroke-linejoin="round"/><path d="M4.500 19.500C4.500 4 19.500 4 19.500 19.500" fill="none" stroke="#f2f2f2" stroke-width="1.0" stroke-linecap="round" stroke-linejoin="round"/><rect x="2.500" y="1.500" width="4" height="4" fill="#f0f0f0" stroke="#888"/><rect x="17.500" y="1.500" width="4" height="4" fill="#f0f0f0" stroke="#888"/><circle cx="4.5" cy="20" r="3.2" fill="url(#gl)" stroke="#999" stroke-width="1"/><circle cx="19.5" cy="20" r="3.2" fill="url(#gl)" stroke="#999" stroke-width="1"/><text x="9.200" y="21" font-family="DejaVu Sans,sans-serif" font-weight="bold" font-size="8" fill="#b5b5b5" stroke="#999" stroke-width=".4">3</text></svg>
<svg class="ic" style="left:919px;top:121px" viewBox="0 0 24 24"><circle cx="12" cy="12.5" r="3.8" fill="url(#gl)" stroke="#999" stroke-width="1"/></svg>
<svg class="ic" style="left:952px;top:121px" viewBox="0 0 24 24"><path d="M1 9L13.700 1.500V20.500L10.500 22.500H1Z" fill="url(#gl)" stroke="#a4a4a4" stroke-linejoin="round"/><path d="M13.700 1.500L22.800 1V3.500L14.800 7.500H13.700Z" fill="#dedede" stroke="#a4a4a4" stroke-linejoin="round"/><path d="M13.700 12.500L22.800 8V13L10.500 22.500L13.700 20.500Z" fill="#d6d6d6" stroke="#a4a4a4" stroke-linejoin="round"/><path d="M13.700 1.500V20.500" stroke="#a4a4a4" stroke-width="1"/></svg>
<svg class="ic" style="left:985px;top:121px" viewBox="0 0 24 24"><text x="0.500" y="22.500" font-family="Liberation Serif,DejaVu Serif,serif" font-style="italic" font-size="32" fill="#e4e4e4" stroke="#9a9a9a" stroke-width=".9" textLength="22" lengthAdjust="spacingAndGlyphs">S</text></svg>
<svg class="ic" style="left:1018px;top:121px" viewBox="0 0 24 24"><path d="M12.500 1.500H22.500V22.500H1.500V11.500H12.500Z" fill="#cfcfcf" stroke="#a8a8a8" stroke-width="1.200" stroke-linejoin="round"/><clipPath id="hcp"><path d="M14.500 3.500H20.500V20.500H3.500V13.500H14.500Z"/></clipPath><path d="M14.500 3.500H20.500V20.500H3.500V13.500H14.500Z" fill="#fbfbfb"/><g clip-path="url(#hcp)" stroke="#505050" stroke-width="2"><path d="M0 10L14 24M4 9L18 23M8 8L22 22M12 7L26 21M12 2L26 16M-4 11L10 25M14-1L28 13"/></g></svg>
<div class="arr" style="left:694px;top:132px"></div>
<div class="arr" style="left:904px;top:132px"></div>
<svg class="a" style="left:1055px;top:125px" width="6" height="18" shape-rendering="crispEdges"><use href="#grip"/></svg>
<svg class="ic" style="left:1066.5px;top:121px" viewBox="0 0 24 24"><text x="1" y="20.500" font-family="DejaVu Serif,Liberation Serif,serif" font-style="italic" font-weight="bold" font-size="23" fill="#e2e2e2" stroke="#999" stroke-width=".9" textLength="21" lengthAdjust="spacingAndGlyphs">A</text></svg>
<svg class="ic" style="left:1100px;top:121px" viewBox="0 0 24 24"><text x="3" y="7.500" font-family="DejaVu Sans,sans-serif" font-weight="bold" font-size="7.500" fill="#cfcfcf" stroke="#8e8e8e" stroke-width=".5">1.00</text><path d="M3.500 12.500H20.500M3.500 12.500V21M20.500 12.500V21" fill="none" stroke="#999" stroke-width="2.4" stroke-linecap="round" stroke-linejoin="round"/><path d="M3.500 12.500H20.500M3.500 12.500V21M20.500 12.500V21" fill="none" stroke="#f2f2f2" stroke-width="0.7999999999999998" stroke-linecap="round" stroke-linejoin="round"/><rect x="1.500" y="10.500" width="3.500" height="3.500" fill="#e0e0e0" stroke="#888" stroke-width=".8"/><rect x="18.500" y="10.500" width="3.500" height="3.500" fill="#e0e0e0" stroke="#888" stroke-width=".8"/><circle cx="12" cy="12.5" r="2.2" fill="url(#gl)" stroke="#999" stroke-width="1"/><rect x="1.200" y="19.500" width="4.600" height="4" rx="1" fill="url(#gl)" stroke="#999"/><rect x="18.200" y="19.500" width="4.600" height="4" rx="1" fill="url(#gl)" stroke="#999"/></svg>
<svg class="ic" style="left:1133px;top:121px" viewBox="0 0 24 24"><path d="M14 6L20 11L20.500 17" fill="none" stroke="#808080" stroke-width="2"/><path d="M2.500 3.500H12.500L16.500 8L12.500 12.500H2.500Z" fill="#f2f2f2" stroke="#808080" stroke-width="1.800" stroke-linejoin="round"/><path d="M5 6.500h6M5 9.500h6" stroke="#808080" stroke-width="1.400"/><path d="M12.500 8h2" stroke="#808080" stroke-width="1"/><circle cx="20.500" cy="19.500" r="2.600" fill="#f2f2f2" stroke="#808080" stroke-width="1.800"/></svg>
<svg class="ic" style="left:1166px;top:121px" viewBox="0 0 24 24"><text x="0.500" y="20.500" font-family="DejaVu Serif,Liberation Serif,serif" font-style="italic" font-weight="bold" font-size="23" fill="#e2e2e2" stroke="#999" stroke-width=".9" textLength="21" lengthAdjust="spacingAndGlyphs">A</text><path d="M18.500 2.500L23.500 7.500L14 17L9.500 18.500L11 14Z" fill="#c9c9c9" stroke="#8a8a8a" stroke-width=".9"/><path d="M16 5l5 5M17.300 3.700l5 5M11 14l3 3" stroke="#8a8a8a" stroke-width=".8"/><path d="M9.500 18.500l1-2.600 1.600 1.600z" fill="#555"/></svg>
<svg class="a" style="left:1203px;top:125px" width="6" height="18" shape-rendering="crispEdges"><use href="#grip"/></svg>
<svg class="ic" style="left:1215px;top:121px" viewBox="0 0 24 24"><path d="M7 3L15.500 18M17 3L8.500 18" stroke="#707375" stroke-width="1.300" fill="none"/><circle cx="6.500" cy="19" r="2.600" fill="none" stroke="#707375" stroke-width="1.300"/><circle cx="17.500" cy="19" r="2.600" fill="none" stroke="#707375" stroke-width="1.300"/></svg>
<svg class="ic" style="left:1247px;top:121px" viewBox="0 0 24 24"><path d="M4.500 3.500H12V6H8.500V19H4.500Z" fill="#e4e4e4" stroke="#8a8d8e" stroke-width="1.300"/><path d="M8.500 6H15L19.500 10.500V20.500H8.500Z" fill="#ededed" stroke="#8a8d8e" stroke-width="1.300"/><path d="M15 6L19.500 10.500H15Z" fill="#808384"/></svg>
<div class="t" style="left:1296px;top:125px;color:#7a7c7d;font-size:13px">&#187;</div>
<svg class="a" style="left:1313px;top:125px" width="6" height="18" shape-rendering="crispEdges"><use href="#grip"/></svg>
<div class="a" style="left:1328px;top:124px;width:18px;height:18px;border-radius:9px;background:#da4453"></div>
<div class="t" style="left:1358px;top:125px;color:#7a7c7d;font-size:13px">&#187;</div>
<div class="t dis" style="left:8px;top:156px">Combo View</div>
<svg class="a" style="left:478px;top:156px" width="13" height="13" viewBox="0 0 13 13" fill="none" stroke="#5a5c5e" stroke-width="1"><rect x="1.5" y="1.5" width="10" height="10" rx="2.5"/><rect x="5.5" y="3.500" width="4" height="4" rx="1"/><rect x="3.500" y="5.500" width="4" height="4" rx="1" fill="#eff0f1"/></svg>
<div class="a" style="left:4px;top:175px;width:61px;height:24px;box-sizing:border-box;border:1px solid #bcbebf;border-bottom:none;border-radius:4px 4px 0 0;background:#e6e7e8"></div>
<div class="t dis" style="left:17px;top:181px">Model</div>
<div class="a" style="left:64px;top:172px;width:77px;height:28px;box-sizing:border-box;border:1px solid #bcbebf;border-bottom:none;border-radius:4px 4px 0 0;background:linear-gradient(#ffffff,#f7f7f7 60%,#eff0f1)"></div>
<svg class="ic" style="left:72px;top:173px" viewBox="0 0 24 24"><path d="M5 8L8.500 4.500L18.500 14.500L15 18Z" fill="#2b5a99" stroke="#1b3c6b" stroke-width="1"/><path d="M7 6.500L17 16.500" stroke="#4f7fc4" stroke-width="1.200"/><path d="M15 18L18.500 14.500L20 19.500Z" fill="#e8e8e8" stroke="#777" stroke-width=".6"/><path d="M18.800 17.800l1.200 1.900-2-.700z" fill="#222"/><circle cx="20.300" cy="19.800" r=".9" fill="#1b3c6b"/></svg>
<div class="t dis" style="left:96px;top:180px">Tasks</div>
<div class="a" style="left:4px;top:198px;width:488px;height:470px;box-sizing:border-box;border:1px solid #bcbebf;border-bottom:none"></div>
<div class="a" style="left:65px;top:198px;width:75px;height:1px;background:#f3f3f4"></div>
<div class="a" style="left:6px;top:200px;width:484px;height:470px;box-sizing:border-box;border:1px solid #a2a4a4;background:linear-gradient(#ffffff 0px,#fdfdfd 5px,#c8c9c9 58px,#a2a4a4 120px,#7b7d7d 188px,#787a7a 200px)"></div>
<div class="btn" style="left:208px;top:218px;width:80px;height:24px"></div>
<svg class="a" style="left:222px;top:223px" width="14" height="14" viewBox="0 0 14 14"><circle cx="7" cy="7" r="6.2" fill="#da4453"/><path d="M4.5 4.5l5 5M9.5 4.5l-5 5" stroke="#fff" stroke-width="1.1"/></svg>
<div class="t dis" style="left:239px;top:224px">Close</div>
<div class="a" style="left:15px;top:259px;width:466px;height:24px;box-sizing:border-box;border:1px solid #fdfdfd;border-bottom:none;border-radius:4px 4px 0 0;background:linear-gradient(90deg,#3daee9,#52b7ec 40%,#8fd3f8 80%,#a8e0fc)"></div>
<svg class="ic" style="left:17px;top:259px" viewBox="0 0 24 24"><rect x="11.100" y="5" width="1.800" height="14" fill="#1d2d50"/><path d="M5 12l3-3 2.200 3-2.200 3z" fill="#3465a4" stroke="#1d2d50" stroke-width=".8"/><path d="M19 12l-3-3-2.200 3 2.200 3z" fill="#3465a4" stroke="#1d2d50" stroke-width=".8"/></svg>
<div class="t" style="left:39px;top:265px;color:#fff;font-weight:bold">Trimex</div>
<svg class="a" style="left:462px;top:264px" width="16" height="16" viewBox="0 0 16 16"><circle cx="8" cy="8" r="7" fill="#eaf4fb"/><path d="M5 8l3-3 3 3M5 11.5l3-3 3 3" fill="none" stroke="#2a90d0" stroke-width="1.4"/></svg>
<div class="a" style="left:15px;top:283px;width:466px;height:185px;background:#eff0f1;box-sizing:border-box;border:1px solid #fbfbfb"></div>
<svg class="a" style="left:495px;top:413px" width="2" height="17" shape-rendering="crispEdges"><rect x="0" y="0" width="1" height="1" fill="#b4b5b6"/><rect x="0" y="3" width="1" height="1" fill="#b4b5b6"/><rect x="0" y="6" width="1" height="1" fill="#b4b5b6"/><rect x="0" y="9" width="1" height="1" fill="#b4b5b6"/><rect x="0" y="12" width="1" height="1" fill="#b4b5b6"/><rect x="0" y="15" width="1" height="1" fill="#b4b5b6"/></svg>
<div class="t dis" style="left:30px;top:305px">Distance</div>
<div class="a" style="left:88px;top:297px;width:379px;height:27px;box-sizing:border-box;border:1px solid #3daee9;border-radius:3px;background:#fcfcfc"></div>
<div class="a" style="left:91px;top:303px;width:70px;height:15px;background:#3daee9"></div>
<div class="t" style="left:92px;top:305px;color:#fff">1700.0 mm</div>
<svg class="a" style="left:446px;top:301px" width="19" height="19" viewBox="0 0 19 19"><circle cx="9.5" cy="9.5" r="8.7" fill="url(#okg)" stroke="#3c7a1a" stroke-width="1"/><path d="M4.5 9.5l3.5 4 6.5-7.5" fill="none" stroke="#f4f4f4" stroke-width="2.6"/></svg>
<svg class="a" style="left:498px;top:153px" width="872" height="502" viewBox="498 153 872 502" shape-rendering="crispEdges">
<rect x="498" y="153" width="872" height="502" fill="#eae4e4"/>
<g fill="#e0e0e0">
<rect x="498" y="294" width="62" height="5"/>
<rect x="556" y="294" width="4" height="216"/>
<rect x="561" y="381" width="92" height="4"/>
<rect x="654" y="384" width="4" height="126"/>
<rect x="498" y="510" width="325" height="9"/>
<rect x="812" y="464" width="110" height="10"/>
<rect x="812" y="464" width="10" height="55"/>
<rect x="912" y="464" width="10" height="46"/>
<rect x="912" y="510" width="416" height="9"/>
<rect x="1318" y="153" width="10" height="366"/>
</g>
<!-- edges -->
<rect x="498" y="293" width="63" height="2" fill="#adadad"/>
<rect x="498" y="299" width="57" height="1" fill="#151515"/>
<rect x="560" y="294" width="1" height="215" fill="#555"/>
<rect x="561" y="380" width="93" height="1" fill="#3cc6e0"/>
<rect x="561" y="385" width="92" height="1" fill="#a6a6a6"/>
<rect x="560" y="384" width="2" height="2" fill="#444"/>
<rect x="652" y="386" width="2" height="123" fill="#ababab"/>
<rect x="658" y="390" width="1" height="119" fill="#111"/>
<rect x="555" y="508" width="5" height="1" fill="#333"/>
<rect x="651" y="508" width="3" height="1" fill="#444"/>
<rect x="498" y="509" width="160" height="1" fill="#8f8f8f"/>
<rect x="658" y="508" width="153" height="3" fill="#0000a8"/>
<rect x="498" y="519" width="325" height="1" fill="#8c8c8c"/>
<rect x="811" y="463" width="1" height="47" fill="#8a8a8a"/>
<rect x="811" y="463" width="112" height="1" fill="#777"/>
<rect x="922" y="463" width="1" height="47" fill="#222"/>
<rect x="822" y="474" width="1" height="46" fill="#777"/>
<rect x="822" y="474" width="90" height="1" fill="#777"/>
<rect x="911" y="474" width="1" height="46" fill="#777"/>
<rect x="922" y="509" width="396" height="1" fill="#858585"/>
<rect x="911" y="519" width="417" height="1" fill="#8c8c8c"/>
<rect x="1317" y="153" width="1" height="357" fill="#808080"/>
<rect x="1328" y="153" width="1" height="367" fill="#111"/>
<g fill="#111">
<rect x="822" y="474" width="2" height="2"/><rect x="910" y="474" width="2" height="2"/>
<rect x="821" y="518" width="3" height="3"/><rect x="910" y="518" width="3" height="3"/>
<rect x="1326" y="518" width="5" height="4"/>
</g>
<!-- ghost rectangle -->
<g fill="#a3a3a3">
<rect x="661" y="293" width="14" height="1"/><rect x="677" y="293" width="49" height="1"/><rect x="729" y="293" width="48" height="1"/><rect x="780" y="293" width="32" height="1"/>
<rect x="811" y="294" width="1" height="8"/><rect x="811" y="305" width="1" height="100"/><rect x="811" y="407" width="1" height="56"/>
</g>
<!-- green tracker -->
<rect x="658" y="293" width="1" height="84" fill="#52d86e"/>
<rect x="656" y="291" width="4" height="4" fill="#52d86e"/>
<rect x="657" y="292" width="2" height="2" fill="#8fe7a0"/>
<g shape-rendering="auto">
<circle cx="659" cy="380.5" r="4.2" fill="#fff"/>
<circle cx="659.5" cy="381" r="10.8" fill="none" stroke="#d00000" stroke-width="2"/>
</g>
<!-- nav cube -->
<g shape-rendering="auto">
<g fill="#8b8e90" stroke="#3a3a3a" stroke-width="1">
<path d="M1298 159.5L1310 172.5H1286Z"/>
<path d="M1298 290L1310 277.5H1286Z"/>
<path d="M1232.5 225L1246 213V237Z"/>
<path d="M1364 225L1350.5 213V237Z"/>
<circle cx="1355.5" cy="167.5" r="6.8" stroke-dasharray="3 1"/>
<path d="M1280 166Q1264 170 1254 181L1250 178.500L1248 194L1263 190L1260.500 187Q1269 178 1282 173Z" stroke-dasharray="5 1"/>
<path d="M1316 166Q1332 170 1342 181L1346 178.500L1348 194L1333 190L1335.500 187Q1327 178 1314 173Z" stroke-dasharray="5 1"/>
</g>
<path d="M1274 193.5H1322L1329.500 201V249L1322 256.500H1274L1266.500 249V201Z" fill="#808386" stroke="#1c1c1c" stroke-width="1.2"/>
<path d="M1282 193.5V201M1314 193.5V201M1282 256.500V249M1314 256.500V249M1266.500 209H1274M1266.500 241H1274M1329.500 209H1322M1329.500 241H1322" stroke="#2a2a2a" stroke-width="1.2" fill="none"/>
<path d="M1282 201H1314L1322 209V241L1314 249H1282L1274 241V209Z" fill="#8d9092" stroke="#e3e3e3" stroke-width="1.2"/>
<path d="M1274 201l8 0M1274 201l0 8M1322 201h-8M1322 201v8M1274 249h8M1274 249v-8M1322 249h-8M1322 249v-8" stroke="#2a2a2a" stroke-width="0" fill="none"/>
<text x="1298" y="229.500" text-anchor="middle" font-family="'Liberation Sans','DejaVu Sans',sans-serif" font-size="13" fill="#dcdcdc">TOP</text>
<clipPath id="cpc"><path d="M1274 193.500H1322L1329.500 201V249L1322 256.500H1274L1266.500 249V201Z"/></clipPath>
<clipPath id="cpa"><path d="M1316 166Q1332 170 1342 181L1346 178.500L1348 194L1333 190L1335.500 187Q1327 178 1314 173Z"/></clipPath>
<rect x="1317" y="194.500" width="13" height="61" fill="#e9ecef" opacity="0.8" clip-path="url(#cpc)"/>
<path d="M1322 201V249" stroke="#8d9092" stroke-width="1" opacity=".6"/>
<rect x="1317" y="160" width="12" height="30" fill="#eef0f2" opacity="0.75" clip-path="url(#cpa)"/>
<g fill="#8b8e90" stroke="#3a3a3a" stroke-width="1" stroke-dasharray="3 1">
<path d="M1333 267l10-4 10 4v10l-10 5-10-5z"/>
</g>
<path d="M1333 267l10 4 10-4M1343 271v11" fill="none" stroke="#ddd" stroke-width="1"/>
</g>
<rect x="1262" y="208" width="3" height="51" fill="#00d800"/>
<rect x="1264" y="258" width="51" height="3" fill="#e00000"/>
<rect x="1262" y="258" width="3" height="3" fill="#0000c8"/>
<!-- axis cross -->
<g shape-rendering="auto" font-family="'DejaVu Sans','Liberation Sans',sans-serif" font-size="10" fill="#111">
<path d="M1345 630V616" stroke="#b9b9b9" stroke-width="1.5"/>
<path d="M1345 630H1358" stroke="#c9a9a9" stroke-width="1.5"/>
<path d="M1343 617h4l-2-4z" fill="#1c7d1c"/>
<path d="M1357 628v4l4-2z" fill="#8a1c1c"/>
<circle cx="1345" cy="630" r="2" fill="#1c1c8a"/>
<text x="1345" y="612">Y</text>
<text x="1346" y="629">Z</text>
<text x="1362" y="629">X</text>
</g>
</svg>

<div class="a" style="left:647px;top:657px;width:118px;height:2px;background:#dcdddd;border-top:1px solid #b5b7b7;box-sizing:border-box"></div>
<div class="a" style="left:498px;top:656px;width:1px;height:3px;background:#7a7c7d"></div>
</body></html>
